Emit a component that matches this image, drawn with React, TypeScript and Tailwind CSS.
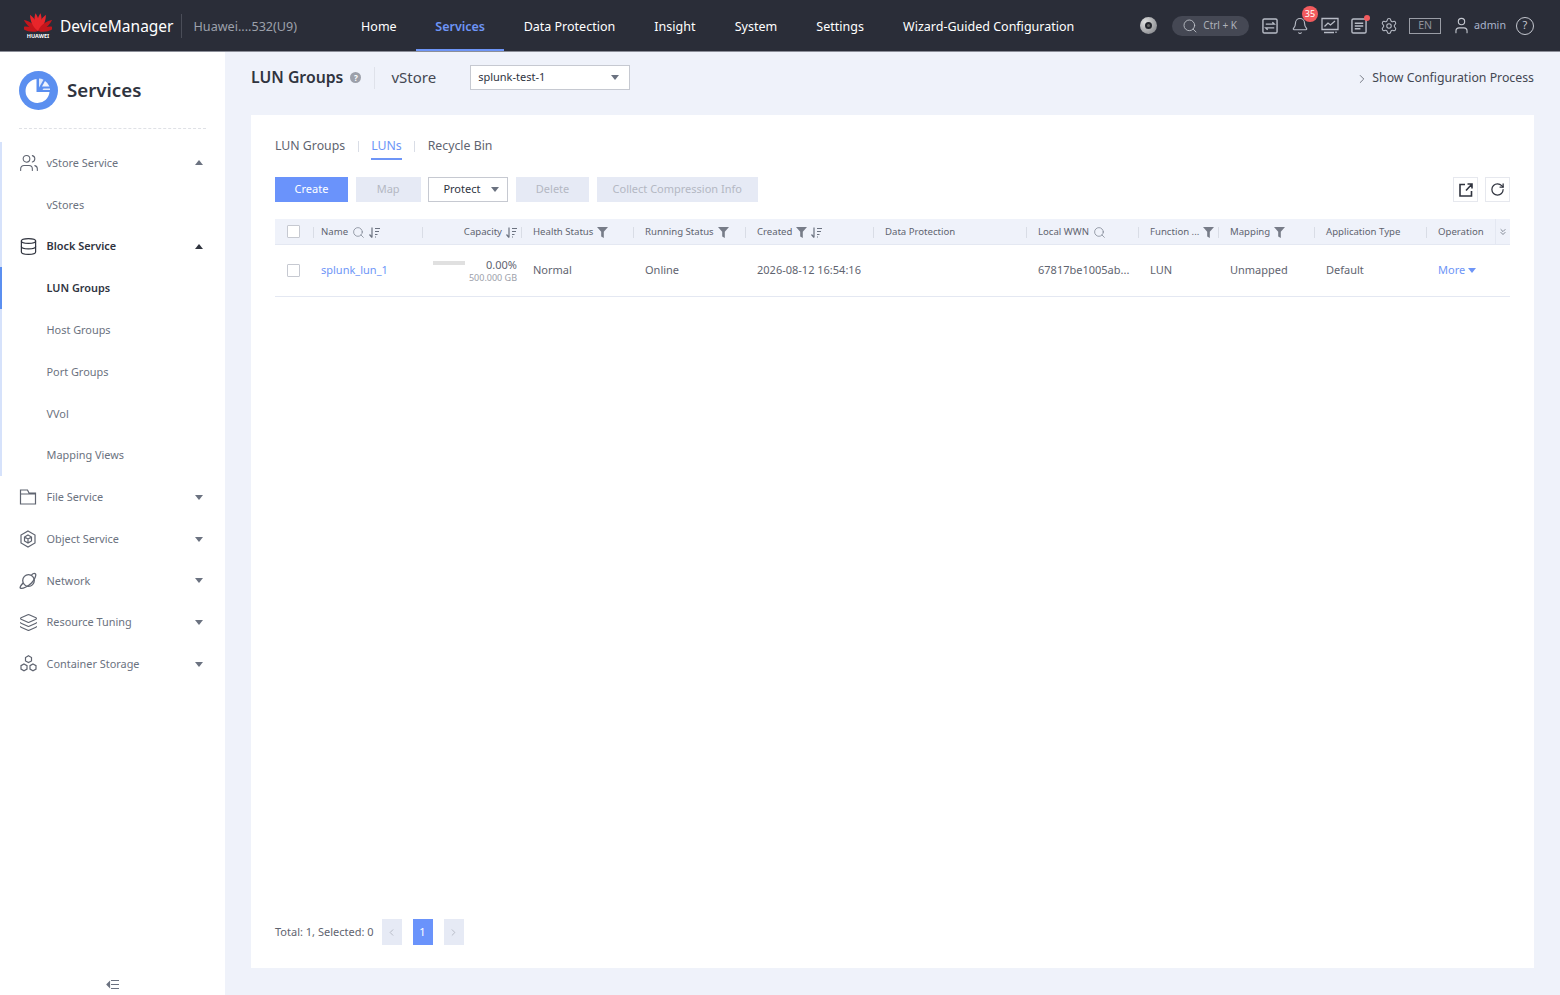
import { Bell, ChevronLeft, ChevronRight, ChevronsDown, Database, Layers, RotateCw, Search, Settings, User, Users } from 'lucide-react';

const sideItems = [
  { label: 'vStore Service', icon: 'users', caret: 'up' },
  { label: 'vStores' },
  { label: 'Block Service', icon: 'db', caret: 'up', dark: true },
  { label: 'LUN Groups', current: true },
  { label: 'Host Groups' },
  { label: 'Port Groups' },
  { label: 'VVol' },
  { label: 'Mapping Views' },
  { label: 'File Service', icon: 'folder', caret: 'down' },
  { label: 'Object Service', icon: 'object', caret: 'down' },
  { label: 'Network', icon: 'planet', caret: 'down' },
  { label: 'Resource Tuning', icon: 'layers', caret: 'down' },
  { label: 'Container Storage', icon: 'hex', caret: 'down' },
];

const navItems = ['Home', 'Services', 'Data Protection', 'Insight', 'System', 'Settings', 'Wizard-Guided Configuration'];

function HuaweiLogo() {
  const angles = [-78, -52, -26, -8, 8, 26, 52, 78];
  return (
    <svg width="28" height="20" viewBox="0 0 28 20">
      {angles.map((a) => (
        <path key={a} d="M14 19 C10.5 13 11.5 6 14 1 C16.5 6 17.5 13 14 19 Z" fill={Math.abs(a) > 40 ? '#c4161c' : '#e8262b'} transform={`rotate(${a} 14 19)`} />
      ))}
    </svg>
  );
}

function SideIcon({ name, dark }: { name: string; dark?: boolean }) {
  const cls = dark ? 'text-[#30343f]' : 'text-[#5f6470]';
  if (name === 'users') return <Users size={20} strokeWidth={1.3} className={cls} />;
  if (name === 'db') return <Database size={19} strokeWidth={1.5} className={cls} />;
  if (name === 'layers') return <Layers size={19} strokeWidth={1.4} className={cls} />;
  if (name === 'folder')
    return (
      <svg width="18" height="18" viewBox="0 0 18 18" fill="none" stroke="currentColor" strokeWidth="1.2" className={cls}>
        <path d="M1.500 2h7l1.500 3h6.500v11h-15z M1.500 6h15" />
      </svg>
    );
  if (name === 'object')
    return (
      <svg width="18" height="18" viewBox="0 0 18 18" fill="none" stroke="currentColor" strokeWidth="1.2" className={cls}>
        <path d="M9 1l7 4v8l-7 4-7-4V5z" />
        <path d="M9 5l3.500 2v4L9 13l-3.500-2V7z M5.500 7L9 9l3.500-2 M9 9v4" />
      </svg>
    );
  if (name === 'planet')
    return (
      <svg width="18" height="18" viewBox="0 0 18 18" fill="none" stroke="currentColor" strokeWidth="1.3" className={cls}>
        <circle cx="9.500" cy="8.500" r="5.800" />
        <path d="M4 11C1.500 14 0.500 15.500 1.500 16.200C3.500 17.200 9 14.500 12.500 11C15.500 8 17.500 3 16.500 2C15.500 1 14 1.500 12.500 3" />
      </svg>
    );
  return (
    <svg width="19" height="18" viewBox="0 0 18 18" fill="none" stroke="currentColor" strokeWidth="1.2" className={cls}>
      <path d="M9 .8l3 1.700v3.400l-3 1.700-3-1.700V2.500z" />
      <path d="M4.500 9l3 1.700v3.400l-3 1.700-3-1.700v-3.400z" />
      <path d="M13.500 9l3 1.700v3.400l-3 1.700-3-1.700v-3.400z" />
    </svg>
  );
}

function Caret({ up, className }: { up?: boolean; className: string }) {
  return <span className={`h-0 w-0 border-x-[4px] border-x-transparent ${up ? 'border-b-[5px]' : 'border-t-[5px]'} ${className}`} />;
}

function Funnel() {
  return (
    <svg width="11" height="11" viewBox="0 0 11 11" className="shrink-0 text-[#777c88]" fill="currentColor">
      <path d="M0 0h11L6.800 4.800V11L4.200 9.600V4.800z" />
    </svg>
  );
}

function SortIcon() {
  return (
    <svg width="11" height="11" viewBox="0 0 11 11" fill="none" stroke="#6b7280" strokeWidth="1.2" className="shrink-0">
      <path d="M3 0.500v10M0.500 7.500l2.500 3 M6 1.500h5M6 4.500h4M6 7.500h2.500M6 10h1" />
    </svg>
  );
}

function SmallSearch() {
  return <Search size={13} strokeWidth={1.2} className="shrink-0 text-[#6b7280]" />;
}

function HeadCell({ children, sep = true, className = 'pl-3' }: { children?: React.ReactNode; sep?: boolean; className?: string }) {
  return (
    <div className={`relative flex h-full items-center gap-1 whitespace-nowrap pt-[1px] text-[9.6px] text-[#5f6470] ${className}`}>
      {sep && <span className="absolute left-0 top-[8px] h-[11px] w-px bg-[#d9dde6]" />}
      {children}
    </div>
  );
}

function TopIconBox({ children }: { children: React.ReactNode }) {
  return <span className="relative flex h-5 w-5 items-center justify-center text-[#b8bcc6]">{children}</span>;
}

export default function App() {
  return (
    <div className="flex h-[995px] w-[1560px] flex-col overflow-hidden bg-[#eff2fa] font-['Noto_Sans',sans-serif]">
      <header className="flex h-[52px] shrink-0 items-center border-b border-[#8b8e98] bg-[#2a2d38] pl-6">
        <div className="flex w-[28px] flex-col items-center">
          <HuaweiLogo />
          <span className="mt-[1px] whitespace-nowrap text-[5.5px] font-bold leading-[6px] text-white">HUAWEI</span>
        </div>
        <span className="ml-[8px] mt-[3px] text-[15.500px] text-white">DeviceManager</span>
        <span className="ml-[7px] h-6 w-px bg-[#4a4d58]" />
        <span className="ml-3 mt-[3px] w-[148px] whitespace-nowrap text-[12.600px] text-[#9da1ab]">Huawei....532(U9)</span>
        <nav className="flex h-full">
          {navItems.map((item) => (
            <a
              key={item}
              className={`flex h-full items-center whitespace-nowrap text-[12.500px] ${
                item === 'Services' ? 'border-b-[2px] border-[#6e95f7] px-[19px] pt-[5px] font-semibold text-[#6e95f7]' : 'px-[19.600px] pt-[3px] text-white'
              }`}
            >
              {item}
            </a>
          ))}
        </nav>
        <div className="ml-auto flex items-center pr-[26px]">
          <span className="flex h-[17px] w-[17px] items-center justify-center rounded-full bg-[radial-gradient(circle_at_30%_30%,#e0e0e0,#77797f)]">
            <span className="h-[7px] w-[7px] rounded-full border-[2px] border-[#23252c] bg-[#666]" />
          </span>
          <span className="ml-[15px] flex h-5 w-[77px] items-center gap-[5px] rounded-full bg-[#454854] pl-[10px] text-[10px] text-[#aeb1ba]">
            <Search size={16} strokeWidth={1.300} className="text-[#c2c5cc]" />
            Ctrl + K
          </span>
          <span className="ml-[11px] flex gap-[9.700px]">
            <TopIconBox>
              <svg width="16" height="16" viewBox="0 0 17 17" fill="none" stroke="currentColor" strokeWidth="1.500">
                <rect x="1" y="1" width="15" height="15" rx="1.500" />
                <path d="M4 6.500h9l-2-2 M13 10.500H4l2 2" />
              </svg>
            </TopIconBox>
            <TopIconBox>
              <Bell size={18} strokeWidth={1.500} />
              <span className="absolute -right-[8px] -top-[10px] flex h-4 w-4 items-center justify-center rounded-full bg-[#f25b5e] text-[9px] text-white">35</span>
            </TopIconBox>
            <TopIconBox>
              <svg width="18" height="17" viewBox="0 0 18 17" fill="none" stroke="currentColor" strokeWidth="1.300">
                <path d="M1 1.500h16v11H1z M3 15.500h10 M15 14.500v1.500 M3.500 9.500l3.500-3.500 2.500 2 4.500-4" />
              </svg>
            </TopIconBox>
            <TopIconBox>
              <svg width="16" height="16" viewBox="0 0 17 17" fill="none" stroke="currentColor" strokeWidth="1.500">
                <rect x="1" y="1" width="15" height="15" rx="1.500" />
                <path d="M4 5.500h9M4 8.500h9M4 11.500h6" />
              </svg>
              <span className="absolute right-[-1px] top-[-1px] h-[6px] w-[6px] rounded-full bg-[#f25b5e]" />
            </TopIconBox>
            <TopIconBox>
              <Settings size={18} strokeWidth={1.400} />
            </TopIconBox>
          </span>
          <span className="ml-[10px] flex h-[16px] w-[32px] items-center justify-center border border-[#9a9da6] text-[10.500px] text-[#8e919b]">EN</span>
          <User size={19} strokeWidth={1.400} className="ml-[11px] text-[#c5c8d0]" />
          <span className="ml-[3px] text-[10.700px] text-[#a9b4cb]">admin</span>
          <span className="ml-[10px] flex h-[18px] w-[18px] items-center justify-center rounded-full border border-[#c5c8d0] text-[11px] text-[#c5c8d0]">?</span>
        </div>
      </header>

      <div className="flex min-h-0 flex-1">
        <aside className="relative flex w-[225px] shrink-0 flex-col bg-white">
          <div className="mx-[19px] flex h-[77px] items-center gap-[9px] border-b border-dashed border-[#dfe1e6]">
            <svg width="39" height="39" viewBox="0 0 39 39" className="shrink-0">
              <circle cx="19.500" cy="19.500" r="19.500" fill="#5b8ff0" />
              <path d="M17.500 8a12 12 0 1 0 13 13H17.500z" fill="#fff" />
              <path d="M20 7.500a11.500 11.500 0 0 1 4.500 1.200L20 16.500z" fill="#dfe9fc" />
              <path d="M26 10a11.500 11.500 0 0 1 4.500 5.500H23z" fill="#eef3fe" />
              <path d="M31 17.500v1.500h-7.500l1-1.500z" fill="#dfe9fc" />
            </svg>
            <span className="mt-[1px] text-[18.700px] font-semibold text-[#30343f]">Services</span>
          </div>
          <nav className="mt-[13px]">
            {sideItems.map((it, i) => (
              <div key={it.label} className="relative flex h-[41.8px] items-center pl-[19px] pr-[22px]">
                {i < 8 && <span className={`absolute left-0 top-0 h-full w-[2px] ${it.current ? 'bg-[#5b8ff0]' : 'bg-[#d6e2fb]'}`} />}
                <span className="flex w-[27.500px] shrink-0 items-center">{it.icon && <SideIcon name={it.icon} dark={it.dark} />}</span>
                <span className={`text-[10.900px] ${it.current || it.dark ? 'font-semibold text-[#30343f]' : 'text-[#6b7280]'}`}>{it.label}</span>
                {it.caret && <Caret up={it.caret === 'up'} className={`ml-auto ${it.caret === 'up' ? (it.dark ? 'border-b-[#30343f]' : 'border-b-[#6b7280]') : 'border-t-[#6b7280]'}`} />}
              </div>
            ))}
          </nav>
          <svg width="14" height="11" viewBox="0 0 14 11" fill="none" stroke="#6b7280" strokeWidth="1.200" className="absolute bottom-[5px] left-[106px]">
            <path d="M5 1.500h8M5 5.500h8M5 9.500h8" />
            <path d="M3.500 3L1 5.500 3.500 8z" fill="#6b7280" />
          </svg>
        </aside>

        <main className="flex min-w-0 flex-1 flex-col pl-[26px] pr-[26px]">
          <div className="flex h-[63px] shrink-0 items-center pb-[12px]">
            <span className="mt-[1px] text-[15.800px] font-semibold text-[#30343f]">LUN Groups</span>
            <span className="ml-[7px] flex h-[11px] w-[11px] items-center justify-center rounded-full bg-[#9ca0aa] text-[8px] font-bold text-white">?</span>
            <span className="ml-[13px] h-[22px] w-px bg-[#dfe2ea]" />
            <span className="ml-[16px] text-[15px] text-[#444853]">vStore</span>
            <div className="ml-[34px] flex h-[25px] w-[160px] items-center border border-[#c6c9d1] bg-white pl-[7px] pr-[10px] text-[11px] text-[#30343f]">
              splunk-test-1
              <Caret className="ml-auto border-t-[#6b7280]" />
            </div>
            <span className="ml-auto mt-[2px] flex items-center gap-[3px] text-[12.300px] text-[#444853]">
              <ChevronRight size={14} strokeWidth={1.200} />
              Show Configuration Process
            </span>
          </div>

          <section className="flex h-[853px] flex-col bg-white px-6 pt-[22px]">
            <div className="flex h-[24px] items-start text-[12.300px] text-[#5f6470]">
              <span>LUN Groups</span>
              <span className="mx-[12.500px] mt-[4px] h-[11px] w-px bg-[#d9dde6]" />
              <span className="border-b-[2px] border-[#6e95f7] pb-[3px] text-[#6e95f7]">LUNs</span>
              <span className="mx-[12.500px] mt-[4px] h-[11px] w-px bg-[#d9dde6]" />
              <span>Recycle Bin</span>
            </div>

            <div className="mt-[16px] flex h-[25px] items-center gap-[7.700px] text-[11px]">
              <button className="h-full w-[73px] bg-[#6a93fb] text-white">Create</button>
              <button className="h-full w-[65px] bg-[#e6eaf5] text-[#b4b8c3]">Map</button>
              <button className="flex h-full w-[80px] items-center border border-[#c6c9d1] pl-[14px] pr-[8px] text-[#30343f]">
                Protect
                <Caret className="ml-auto border-t-[#6b7280]" />
              </button>
              <button className="h-full w-[73px] bg-[#e6eaf5] text-[#b4b8c3]">Delete</button>
              <button className="h-full w-[161px] bg-[#e6eaf5] text-[#b4b8c3]">Collect Compression Info</button>
              <div className="ml-auto flex gap-[7px]">
                <span className="flex h-[25px] w-[25px] items-center justify-center border border-[#e6e8ee] text-[#30343f]">
                  <svg width="14" height="14" viewBox="0 0 14 14" fill="none" stroke="currentColor" strokeWidth="1.600">
                    <path d="M6 1.500H1v11.500h11.500V8 M7 7.500L13 1 M8.500 1H13v4.500" />
                  </svg>
                </span>
                <span className="flex h-[25px] w-[25px] items-center justify-center border border-[#e6e8ee] text-[#30343f]">
                  <RotateCw size={15} strokeWidth={2} />
                </span>
              </div>
            </div>

            <div className="mt-[17px] grid h-[26px] grid-cols-[38px_109px_99px_112px_112px_128px_153px_112px_80px_96px_112px_69px_15px] items-center border-b border-[#e4e8f2] bg-[#eff2fa]">
              <div className="flex h-full items-center pl-[12px]">
                <span className="h-[13px] w-[13px] rounded-[1px] border border-[#c6c9d1] bg-white" />
              </div>
              <HeadCell className="pl-2">
                Name <SmallSearch /> <SortIcon />
              </HeadCell>
              <HeadCell className="justify-end pr-[4px]">
                Capacity <SortIcon />
              </HeadCell>
              <HeadCell>
                Health Status <Funnel />
              </HeadCell>
              <HeadCell>
                Running Status <Funnel />
              </HeadCell>
              <HeadCell>
                Created <Funnel /> <SortIcon />
              </HeadCell>
              <HeadCell>Data Protection</HeadCell>
              <HeadCell>
                Local WWN <SmallSearch />
              </HeadCell>
              <HeadCell>
                Function ... <Funnel />
              </HeadCell>
              <HeadCell>
                Mapping <Funnel />
              </HeadCell>
              <HeadCell>Application Type</HeadCell>
              <HeadCell>Operation</HeadCell>
              <div className="flex h-full items-center justify-center border-l border-[#e4e8f2]">
                <ChevronsDown size={10} className="text-[#6b7280]" />
              </div>
            </div>

            <div className="grid h-[52px] grid-cols-[38px_109px_99px_112px_112px_128px_153px_112px_80px_96px_112px_69px_15px] items-center border-b border-[#e4e8f2] text-[11px] text-[#5f6470]">
              <div className="pl-[12px]">
                <span className="block h-[13px] w-[13px] rounded-[1px] border border-[#c6c9d1]" />
              </div>
              <a className="pl-2 text-[#6e95f7]">splunk_lun_1</a>
              <div className="flex flex-col items-end pr-[4px]">
                <div className="flex w-[84px] items-center justify-between leading-[13px]">
                  <span className="-mt-[2px] h-[4px] w-[32px] bg-[#e0e0e0]" />
                  <span>0.00%</span>
                </div>
                <span className="mt-[1px] text-[9px] leading-[12px] text-[#9ca0aa]">500.000 GB</span>
              </div>
              <span className="pl-3">Normal</span>
              <span className="pl-3">Online</span>
              <span className="whitespace-nowrap pl-3">2026-08-12 16:54:16</span>
              <span />
              <span className="whitespace-nowrap pl-3">67817be1005ab...</span>
              <span className="pl-3">LUN</span>
              <span className="pl-3">Unmapped</span>
              <span className="pl-3">Default</span>
              <span className="flex items-center gap-[3px] pl-[12px] text-[#6e95f7]">
                More
                <Caret className="border-t-[#6e95f7]" />
              </span>
              <span />
            </div>

            <div className="mt-auto mb-[23px] flex h-[26px] items-center text-[11px] text-[#5f6470]">
              <span>Total: 1, Selected: 0</span>
              <span className="ml-2 flex h-[26px] w-5 items-center justify-center bg-[#e6eaf5] text-[#b4b8c3]">
                <ChevronLeft size={11} />
              </span>
              <span className="ml-[11px] flex h-[26px] w-5 items-center justify-center bg-[#6a93fb] text-white">1</span>
              <span className="ml-[11px] flex h-[26px] w-5 items-center justify-center bg-[#e6eaf5] text-[#b4b8c3]">
                <ChevronRight size={11} />
              </span>
            </div>
          </section>
        </main>
      </div>
    </div>
  );
}
